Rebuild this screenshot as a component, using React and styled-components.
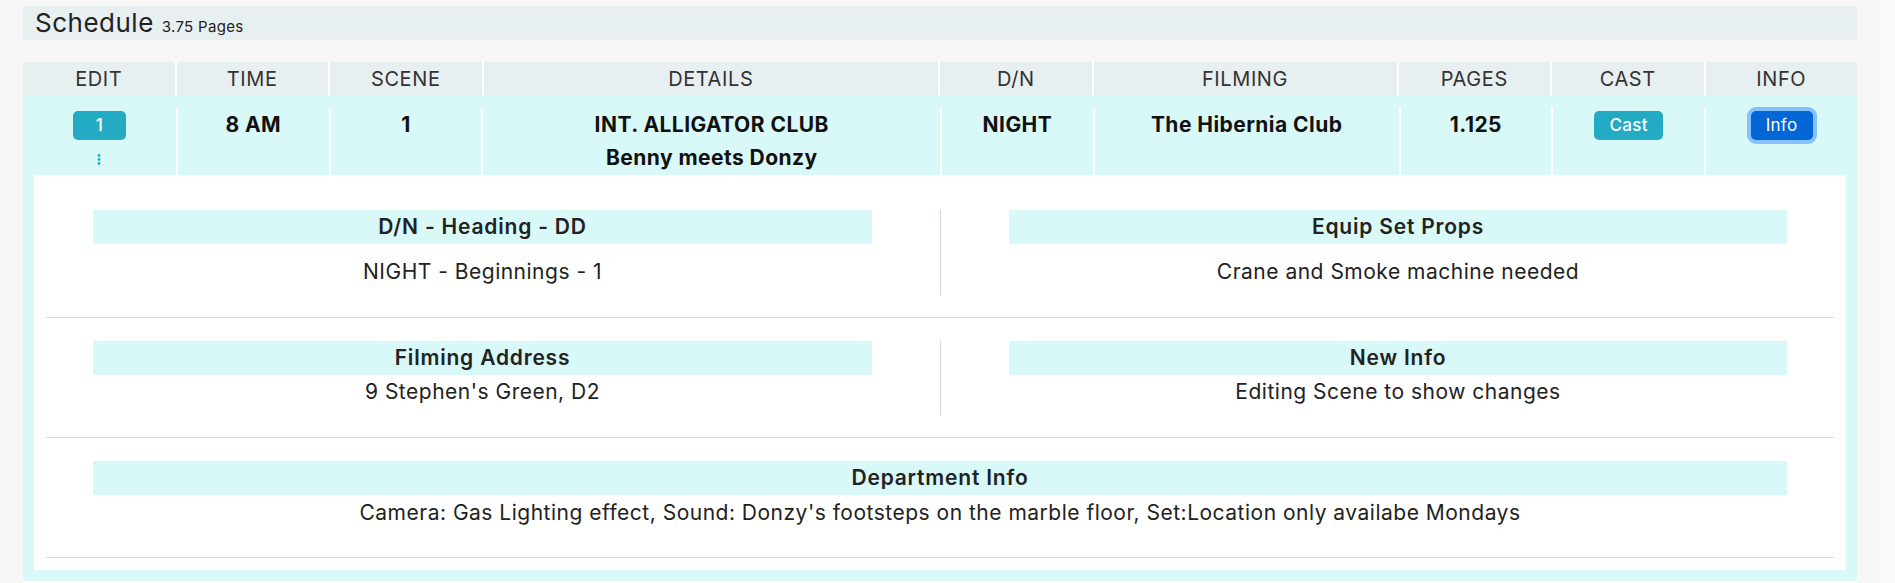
import React from 'react';
import styled, { createGlobalStyle } from 'styled-components';

const GlobalStyle = createGlobalStyle`
  html, body {
    margin: 0;
    padding: 0;
    background: #f7f7f7;
  }
  body {
    font-family: Inter, "Noto Sans", sans-serif;
    color: #212529;
  }
`;

const Page = styled.div`
  display: flex;
  min-height: 583px;
`;

const Main = styled.main`
  flex: 1;
  padding: 6px 23px 0 23px;
`;

const ScrollTrack = styled.div`
  width: 15px;
  background: #fafafa;
`;

const TitleBar = styled.div`
  display: flex;
  align-items: baseline;
  gap: 8px;
  height: 34px;
  padding: 0 12px;
  background: #e8eff1;
`;

const Title = styled.h2`
  margin: 0;
  font-size: 26px;
  font-weight: 400;
  letter-spacing: 0.5px;
  line-height: 34px;
  color: #222;
`;

const TitleMeta = styled.span`
  font-size: 15px;
  letter-spacing: 0.3px;
  color: #222;
`;

const COLS = '1fr 1fr 1fr 3fr 1fr 2fr 1fr 1fr 1fr';

const HeadRow = styled.div`
  display: grid;
  grid-template-columns: ${COLS};
  column-gap: 2px;
  margin-top: 22px;
  background: #fff;
`;

const HeadCell = styled.div`
  background: #e8eff1;
  height: 34px;
  line-height: 34px;
  text-align: center;
  font-size: 20px;
  letter-spacing: 0.6px;
  color: #333;
  text-transform: uppercase;
`;

const SceneRow = styled.div`
  background: #d9f8f8;
  padding: 12px 0 0;
`;

const SceneCells = styled.div`
  display: grid;
  grid-template-columns: ${COLS};
  height: 67px;
`;

const SceneCell = styled.div`
  display: flex;
  flex-direction: column;
  align-items: center;
  padding-top: 3px;
  border-left: ${p => (p.first ? 'none' : '2px solid #fff')};
  font-size: 21px;
  font-weight: 700;
  letter-spacing: 0.45px;
  color: #111;
  line-height: 28px;
  text-align: center;
`;

const SubLine = styled.div`
  margin-top: 5px;
`;

const Button = styled.button`
  height: 29px;
  width: ${p => p.w}px;
  border: none;
  border-radius: 5px;
  background: ${p => (p.primary ? '#0366d6' : '#22abc2')};
  color: #fff;
  font-family: inherit;
  font-size: 17px;
  font-weight: ${p => (p.primary ? 400 : 500)};
  letter-spacing: 0.3px;
  line-height: 29px;
  padding: 0;
  box-shadow: ${p => (p.focused ? '0 0 0 4px #86c2ff' : 'none')};
`;

const Kebab = styled.svg`
  margin-top: 14px;
  display: block;
`;

const Expanded = styled.div`
  background: #d9f8f8;
  padding: 0 11px 11px;
`;

const Panel = styled.div`
  background: #fff;
  padding: 35px 12px 12px;
`;

const Section = styled.div`
  display: grid;
  grid-template-columns: ${p => (p.single ? '1fr' : '1fr 1fr')};
`;

const Column = styled.div`
  padding: ${p => (p.right ? '0 47px 11px 68px' : p.full ? '0 47px 10px' : '0 68px 11px 47px')};
  border-left: ${p => (p.right ? '1px solid #d3d9d9' : 'none')};
`;

const Label = styled.div`
  height: 34px;
  line-height: 34px;
  background: #d9f8f8;
  text-align: center;
  font-size: 21px;
  font-weight: 600;
  letter-spacing: 0.8px;
  color: #222;
`;

const Value = styled.div`
  margin-top: ${p => p.gap}px;
  line-height: 24px;
  text-align: center;
  font-size: 21px;
  letter-spacing: 0.5px;
  color: #222;
`;

const Rule = styled.hr`
  margin: 22px 0 23px;
  border: none;
  border-top: 1px solid #d6dcdc;
  &:last-child {
    margin-bottom: 0;
  }
`;

const NextRow = styled.div`
  height: 20px;
  background: #fffff4;
`;

const headers = ['Edit', 'Time', 'Scene', 'Details', 'D/N', 'Filming', 'Pages', 'Cast', 'Info'];

const Field = ({ label, value, gap, ...rest }) => (
  <Column {...rest}>
    <Label>{label}</Label>
    <Value gap={gap}>{value}</Value>
  </Column>
);

const App = () => {
  return (
    <Page>
      <GlobalStyle />
      <Main>
        <TitleBar>
          <Title>Schedule</Title>
          <TitleMeta>3.75 Pages</TitleMeta>
        </TitleBar>

        <HeadRow>
          {headers.map(h => (
            <HeadCell key={h}>{h}</HeadCell>
          ))}
        </HeadRow>

        <SceneRow>
          <SceneCells>
            <SceneCell first>
              <Button w={53}>1</Button>
              <Kebab width="4" height="11" viewBox="0 0 4 11">
                <circle cx="2" cy="1.5" r="1.4" fill="#22abc2" />
                <circle cx="2" cy="5.5" r="1.4" fill="#22abc2" />
                <circle cx="2" cy="9.5" r="1.4" fill="#22abc2" />
              </Kebab>
            </SceneCell>
            <SceneCell>8 AM</SceneCell>
            <SceneCell>1</SceneCell>
            <SceneCell>
              <div>INT. ALLIGATOR CLUB</div>
              <SubLine>Benny meets Donzy</SubLine>
            </SceneCell>
            <SceneCell>NIGHT</SceneCell>
            <SceneCell>The Hibernia Club</SceneCell>
            <SceneCell>1.125</SceneCell>
            <SceneCell>
              <Button w={69}>Cast</Button>
            </SceneCell>
            <SceneCell>
              <Button w={62} primary focused>Info</Button>
            </SceneCell>
          </SceneCells>
        </SceneRow>

        <Expanded>
          <Panel>
            <Section>
              <Field label="D/N - Heading - DD" value="NIGHT - Beginnings - 1" gap={16} />
              <Field right label="Equip Set Props" value="Crane and Smoke machine needed" gap={16} />
            </Section>
            <Rule />
            <Section>
              <Field label="Filming Address" value="9 Stephen's Green, D2" gap={5} />
              <Field right label="New Info" value="Editing Scene to show changes" gap={5} />
            </Section>
            <Rule />
            <Section single>
              <Field
                full
                label="Department Info"
                value="Camera: Gas Lighting effect, Sound: Donzy's footsteps on the marble floor, Set:Location only availabe Mondays"
                gap={6}
              />
            </Section>
            <Rule />
          </Panel>
        </Expanded>
        <NextRow />
      </Main>
      <ScrollTrack />
    </Page>
  );
};

export default App;
